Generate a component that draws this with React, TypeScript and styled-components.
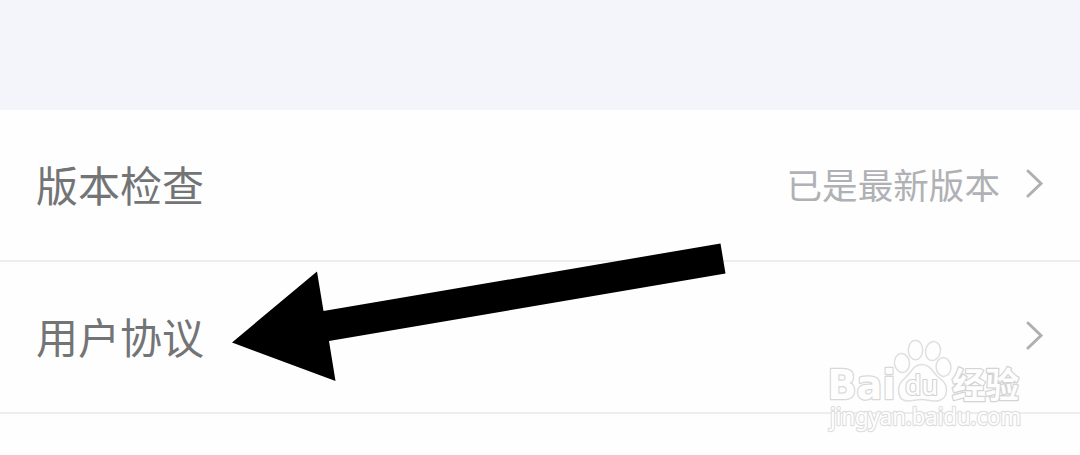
import styled, { createGlobalStyle } from 'styled-components';

const GlobalStyle = createGlobalStyle`
    body {
        margin: 0;
        background: #fefefe;
        font-family: 'Noto Sans CJK SC', sans-serif;
    }
`;

const Screen = styled.main`
    position: relative;
    width: 1080px;
    height: 455px;
    overflow: hidden;
    background: #fefefe;
`;

const Spacer = styled.div`
    height: 110px;
    background: #f4f5fa;
`;

const SettingsRow = styled.div`
    box-sizing: border-box;
    display: flex;
    align-items: center;
    height: 152px;
    padding: 0 36px 2px;
    border-bottom: 2px solid #ededed;
`;

const Label = styled.span`
    flex: 1;
    color: #737476;
    font-size: 42px;
    line-height: 60px;
`;

const Value = styled.span`
    margin-right: 26px;
    color: #b0b1b4;
    font-size: 35.6px;
    line-height: 52px;
`;

const Chevron = styled.svg`
    width: 18px;
    height: 30px;
    margin-bottom: 3px;
    fill: none;
    stroke: #b0b0b1;
    stroke-width: 3;
    stroke-linecap: round;
`;

const Pointer = styled.svg`
    position: absolute;
    top: 240px;
    left: 228px;
`;

const Watermark = styled.svg`
    position: absolute;
    top: 330px;
    left: 820px;
    fill: #fefefe;
    stroke: #dfdfdf;
    stroke-width: 1.5;
    stroke-linejoin: round;
`;

const BrandText = styled.text`
    font-family: 'DejaVu Sans', sans-serif;
    font-size: 41px;
    font-weight: 700;
    stroke: #d8d8d8;
    stroke-width: 2.6;
    paint-order: stroke;
`;

const PawText = styled.text`
    font-family: 'Noto Sans', sans-serif;
    font-size: 27px;
    font-weight: 500;
    stroke: #d2d2d2;
    stroke-width: 2.2;
    paint-order: stroke;
`;

const ProductText = styled.text`
    font-family: 'Noto Sans CJK SC', sans-serif;
    font-size: 35px;
    font-weight: 700;
    stroke: #d4d4d4;
    stroke-width: 2.6;
    paint-order: stroke;
`;

const UrlText = styled.text`
    font-family: 'Noto Sans', sans-serif;
    font-size: 23px;
    font-weight: 400;
    stroke-width: 2.4;
    paint-order: stroke;
`;

interface SettingProps {
    label: string;
    value?: string;
}

function Setting({ label, value }: SettingProps) {
    return (
        <SettingsRow>
            <Label>{label}</Label>
            {value && <Value>{value}</Value>}
            <Chevron viewBox="0 0 18 30">
                <path d="M2 3 L15 15.5 L2 28" />
            </Chevron>
        </SettingsRow>
    );
}

function App() {
    return (
        <Screen>
            <GlobalStyle />
            <Spacer />
            <Setting label="版本检查" value="已是最新版本" />
            <Setting label="用户协议" />
            <Watermark height="115" viewBox="0 0 230 115" width="230">
                <BrandText lengthAdjust="spacingAndGlyphs" textLength="68" x="7.5" y="68.5">
                    Bai
                </BrandText>
                <ellipse cx="82" cy="33" rx="7.5" ry="9.5" transform="rotate(-8 82 33)" />
                <ellipse cx="95.5" cy="20" rx="7.2" ry="9.8" />
                <ellipse cx="113" cy="21" rx="7.4" ry="9.6" transform="rotate(12 113 21)" />
                <ellipse cx="123.5" cy="37" rx="7.4" ry="9.4" transform="rotate(-5 123.5 37)" />
                <path d="M102 34.5 C110 34.5 113 42 117 46 C123 51 126.5 53 126.5 60 C126.5 67 122 71 115 71 C109 71 107 69.5 102 69.5 C96 69.5 93 71 88 71 C81 71 78.5 66 78.5 60 C78.5 53 83 50 87 46 C92 41 94 34.5 102 34.5 Z" />
                <PawText lengthAdjust="spacingAndGlyphs" textLength="33" x="85" y="65">
                    du
                </PawText>
                <ProductText lengthAdjust="spacingAndGlyphs" textLength="67" x="132" y="67.5">
                    经验
                </ProductText>
                <UrlText lengthAdjust="spacingAndGlyphs" textLength="191" x="10" y="95">
                    jingyan.baidu.com
                </UrlText>
            </Watermark>
            <Pointer height="145" viewBox="0 0 500 145" width="500">
                <path d="M4 102.5 L89 31.5 L95.5 71 L492.5 3.5 L497.5 33.5 L101 101 L107.5 141 Z" />
            </Pointer>
        </Screen>
    );
}

export default App;
